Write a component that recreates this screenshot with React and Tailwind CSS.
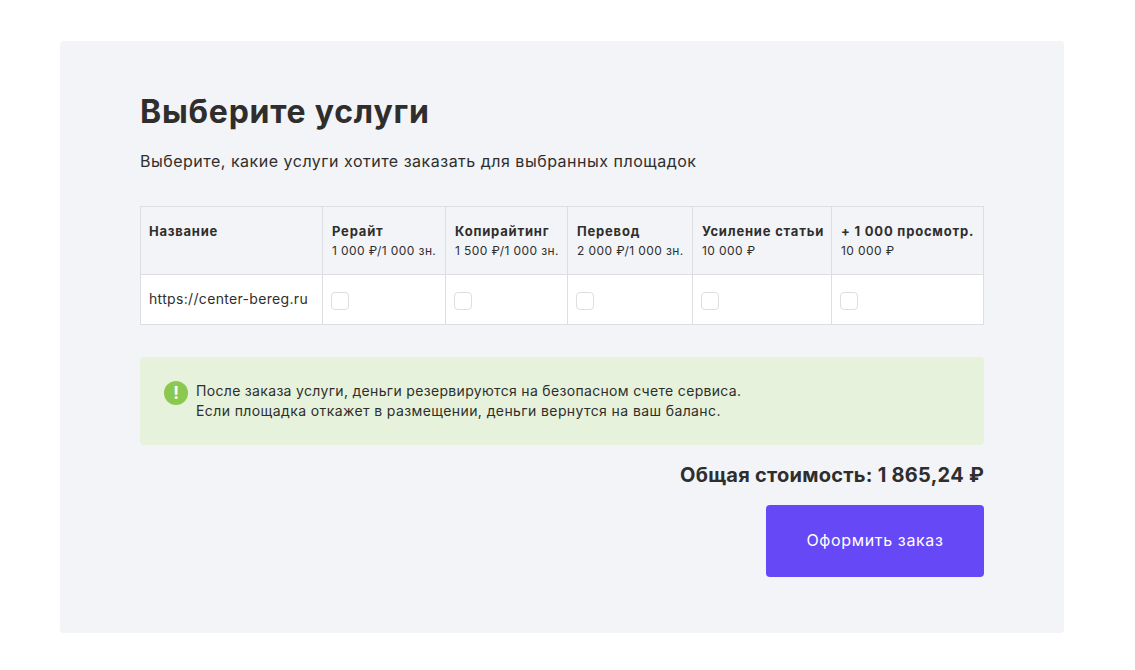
const columns = [
  { title: "Рерайт", price: "1 000 ₽/1 000 зн.", width: "w-[123px]" },
  { title: "Копирайтинг", price: "1 500 ₽/1 000 зн.", width: "w-[122px]" },
  { title: "Перевод", price: "2 000 ₽/1 000 зн.", width: "w-[125px]" },
  { title: "Усиление статьи", price: "10 000 ₽", width: "w-[139px]" },
  { title: "+ 1 000 просмотр.", price: "10 000 ₽", width: "w-[152px]" },
];

const App = () => {
  return (
    <div className="min-h-[670px] bg-white pt-[41px] pl-[60px] font-['Inter',sans-serif] text-[#2f2e2c]">
      <div className="w-[1004px] h-[592px] bg-[#f2f4f8] rounded px-[80px] pt-[50px]">
        <h1 className="text-[32px] leading-[42px] font-bold tracking-[0.77px]">Выберите услуги</h1>
        <p className="mt-[16px] text-base leading-[24px] tracking-[0.5px]">
          Выберите, какие услуги хотите заказать для выбранных площадок
        </p>

        {/* Services table */}
        <table className="mt-[33px] w-[843px] table-fixed border-collapse">
          <colgroup>
            <col className="w-[182px]" />
            {columns.map((col) => (
              <col key={col.title} className={col.width} />
            ))}
          </colgroup>
          <thead>
            <tr className="h-[68px]">
              <th className="border border-[#dcdee2] px-[8px] pt-[15px] align-top text-left text-[13px] leading-[18px] font-bold tracking-[0.75px]">
                Название
              </th>
              {columns.map((col) => (
                <th
                  key={col.title}
                  className="border border-[#dcdee2] pl-[9px] pt-[15px] align-top text-left whitespace-nowrap"
                >
                  <div className="text-[13px] leading-[18px] font-bold tracking-[0.8px]">{col.title}</div>
                  <div className="mt-[2px] text-xs leading-[18px] font-normal tracking-[0.4px]">{col.price}</div>
                </th>
              ))}
            </tr>
          </thead>
          <tbody>
            <tr className="h-[50px] bg-white">
              <td className="border border-[#dcdee2] px-[8px] pb-[2px] text-sm tracking-[0.33px]">https://center-bereg.ru</td>
              {columns.map((col) => (
                <td key={col.title} className="border border-[#dcdee2] pl-[8px] pt-[3px]">
                  <input
                    type="checkbox"
                    className="block appearance-none w-[18px] h-[18px] bg-white border border-[#dcdee2] rounded"
                  />
                </td>
              ))}
            </tr>
          </tbody>
        </table>

        {/* Notice */}
        <div className="mt-[32px] h-[88px] bg-[#e6f2dc] rounded flex items-start pl-[24px] pt-[24px]">
          <div className="w-6 h-6 shrink-0 rounded-full bg-[#8bc84f] flex items-center justify-center text-white text-[17px] leading-none font-bold">
            !
          </div>
          <p className="ml-[8px] text-sm leading-[20px] tracking-[0.32px]">
            После заказа услуги, деньги резервируются на безопасном счете сервиса.
            <br />
            <span className="tracking-[0.4px]">Если площадка откажет в размещении, деньги вернутся на ваш баланс.</span>
          </p>
        </div>

        <div className="mt-[16px] text-right text-xl leading-[28px] font-bold tracking-[0.25px]">
          Общая стоимость: 1 865,24 ₽
        </div>

        <div className="mt-[16px] flex justify-end">
          <button className="w-[218px] h-[72px] pb-[2px] rounded bg-[#6648f6] text-white text-base tracking-[0.64px]">Оформить заказ</button>
        </div>
      </div>
    </div>
  );
};

export default App;
